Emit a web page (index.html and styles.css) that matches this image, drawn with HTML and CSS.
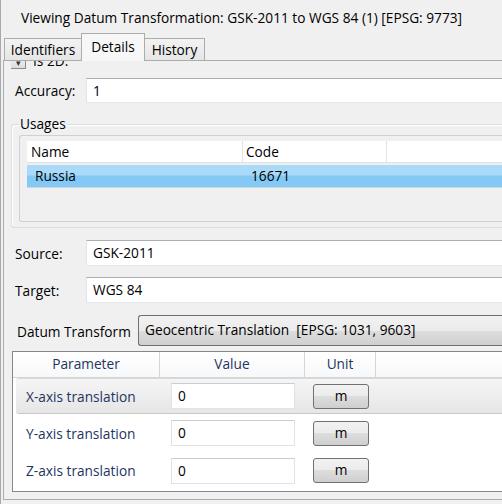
FILE: index.html
```html
<!DOCTYPE html>
<html lang="en">
<head>
  <meta charset="UTF-8">
  <title>Datum Transformation</title>
  <link rel="stylesheet" href="styles.css">
</head>
<body>
  <div class="window">
    <div class="title">Viewing Datum Transformation: GSK-2011 to WGS 84 (1) [EPSG: 9773]</div>

    <div class="tabs">
      <div class="tab tab-ids">Identifiers</div>
      <div class="tab tab-details active">Details</div>
      <div class="tab tab-history">History</div>
    </div>

    <div class="panel">
      <!-- scrolled: only the bottom of the first row shows -->
      <div class="scroll-clip">
        <div class="check-row">
          <span class="expander">&#9662;</span>
          <span>Is 2D:</span>
        </div>
      </div>

      <div class="field-row row-accuracy">
        <label class="field-label">Accuracy:</label>
        <div class="textbox">1</div>
      </div>

      <fieldset class="group">
        <legend>Usages</legend>
        <div class="listbox">
          <div class="list-header">
            <div class="col col-name">Name</div>
            <div class="col col-code">Code</div>
            <div class="col col-rest"></div>
          </div>
          <div class="list-row selected">
            <div class="col col-name">Russia</div>
            <div class="col col-code">16671</div>
          </div>
        </div>
      </fieldset>

      <div class="field-row row-source">
        <label class="field-label">Source:</label>
        <div class="textbox">GSK-2011</div>
      </div>

      <div class="field-row row-target">
        <label class="field-label">Target:</label>
        <div class="textbox">WGS 84</div>
      </div>

      <div class="datum-row">
        <label class="datum-label">Datum Transform</label>
        <div class="combo">Geocentric Translation  [EPSG: 1031, 9603]</div>
      </div>

      <div class="grid">
        <div class="grid-header">
          <div class="gcol gcol-param">Parameter</div>
          <div class="gcol gcol-value">Value</div>
          <div class="gcol gcol-unit">Unit</div>
          <div class="gcol gcol-rest"></div>
        </div>
        <div class="grid-row current">
          <div class="gcol gcol-param">X-axis translation</div>
          <div class="gcol gcol-value"><div class="cell-box">0</div></div>
          <div class="gcol gcol-unit"><div class="unit-btn">m</div></div>
        </div>
        <div class="grid-row row-y">
          <div class="gcol gcol-param">Y-axis translation</div>
          <div class="gcol gcol-value"><div class="cell-box">0</div></div>
          <div class="gcol gcol-unit"><div class="unit-btn">m</div></div>
        </div>
        <div class="grid-row">
          <div class="gcol gcol-param">Z-axis translation</div>
          <div class="gcol gcol-value"><div class="cell-box">0</div></div>
          <div class="gcol gcol-unit"><div class="unit-btn">m</div></div>
        </div>
      </div>
    </div>
  </div>
</body>
</html>
```

FILE: styles.css
```css
html, body {
  margin: 0;
  width: 502px;
  height: 504px;
  overflow: hidden;
}
body {
  background-color: #f0f0f0;
  font-family: "Open Sans", "Noto Sans", sans-serif;
  font-size: 13.7px;
  color: #000;
}
.window {
  width: 560px;
  height: 504px;
  border-left: 1px solid #a9a9a9;
  padding-left: 2px;
  box-sizing: border-box;
}
.title {
  height: 33px;
  box-sizing: border-box;
  padding: 9px 0 0 18px;
  line-height: 17px;
  white-space: nowrap;
}

/* tab strip */
.tabs {
  display: flex;
  align-items: flex-end;
  height: 27px;
  padding-left: 1px;
}
.tab {
  height: 22px;
  box-sizing: border-box;
  border: 1px solid #acacac;
  border-bottom: none;
  background: linear-gradient(#f3f3f3, #e5e5e5);
  display: flex;
  align-items: center;
  justify-content: center;
  line-height: 16px;
}
.tab-ids {
  width: 77px;
  border-right: none;
}
.tab-details {
  width: 64px;
}
.tab-history {
  width: 60px;
  border-left: none;
}
.tab.active {
  height: 28px;
  margin-bottom: -1px;
  background: #f7f7f7;
  position: relative;
  z-index: 1;
  padding-bottom: 2px;
}

.panel {
  height: 440px;
  box-sizing: border-box;
  border-top: 1px solid #acacac;
  border-left: 1px solid #acacac;
  border-bottom: 1px solid #acacac;
  padding-left: 7px;
}

.scroll-clip {
  height: 17px;
  overflow: hidden;
}
.check-row {
  margin-top: -8px;
  display: flex;
  align-items: center;
  gap: 7px;
  height: 16px;
  line-height: 16px;
}
.expander {
  width: 16px;
  height: 15px;
  box-sizing: border-box;
  margin-left: -1px;
  border: 1px solid #8a8a8a;
  background: linear-gradient(#f6f6f6, #dcdcdc);
  font-size: 9px;
  line-height: 15px;
  text-align: center;
  color: #333;
}

/* label + textbox rows */
.field-row {
  display: flex;
  align-items: center;
  height: 26px;
  padding-left: 4px;
}
.field-label {
  width: 71px;
  flex: none;
}
.textbox {
  flex: 1;
  height: 26px;
  box-sizing: border-box;
  background: #fff;
  border: 1px solid #e2e3ea;
  border-top-color: #abadb3;
  border-bottom-color: #e3e9ef;
  padding-left: 6px;
  line-height: 23px;
}
.row-accuracy {
  height: 25px;
}
.row-accuracy .textbox {
  height: 25px;
}
.row-source {
  margin-top: 12px;
}
.row-target {
  margin-top: 11px;
}

/* usages group box */
.group {
  margin: 13px 0 0 0;
  padding: 0 0 5px 7px;
  border: 1px solid #d5dfe5;
  border-right: none;
  border-radius: 3px 0 0 3px;
  box-shadow: inset 1px 1px 0 #fff;
}
.group legend {
  padding: 0 1px;
  line-height: 16px;
}
.listbox {
  margin-top: 3px;
  height: 87px;
  box-sizing: border-box;
  border: 1px solid #d0d0d0;
  border-right: none;
  border-radius: 3px 0 0 3px;
  padding: 5px 0 0 7px;
}
.list-header {
  display: flex;
  height: 22px;
  background: #fff;
  border-bottom: 1px solid #e0e0e0;
  box-sizing: border-box;
}
.list-header .col {
  border-right: 1px solid #e3e3e3;
  line-height: 22px;
}
.col {
  box-sizing: border-box;
  flex: none;
}
.col-name {
  width: 216px;
  padding-left: 4px;
}
.col-code {
  width: 144px;
  padding-left: 3px;
}
.col-rest {
  flex: 1;
}
.list-row {
  display: flex;
  height: 23px;
  margin-top: 2px;
  line-height: 22px;
}
.list-row .col {
  padding-left: 8px;
}
.list-row.selected {
  background: linear-gradient(#a9daf9 0, #a9daf9 45%, #84c9f6 50%, #84c9f6 100%);
  border-bottom: 1px solid #c9d7e0;
  box-sizing: border-box;
}

/* datum transform combo */
.datum-row {
  display: flex;
  align-items: center;
  margin-top: 12px;
  padding-left: 6px;
  height: 31px;
}
.datum-label {
  width: 121px;
  flex: none;
  padding-top: 2px;
}
.combo {
  flex: 1;
  height: 31px;
  box-sizing: border-box;
  border: 1px solid #707070;
  border-right: none;
  border-radius: 3px 0 0 3px;
  background: linear-gradient(#f2f2f2 0, #ebebeb 50%, #dddddd 50%, #cfcfcf 100%);
  padding-left: 6px;
  line-height: 28px;
  white-space: pre;
}

/* parameter grid */
.grid {
  margin: 5px 0 0 1px;
  height: 141px;
  box-sizing: border-box;
  border: 1px solid #828790;
  border-right: none;
  background: #fff;
  color: #1e3561;
}
.grid-header {
  display: flex;
  height: 26px;
  box-sizing: border-box;
  border-bottom: 1px solid #d5d5d5;
  background: linear-gradient(#ffffff, #f7f8f9);
}
.grid-header .gcol {
  border-right: 1px solid #d5d5d5;
  text-align: center;
  line-height: 24px;
}
.gcol {
  box-sizing: border-box;
  flex: none;
}
.gcol-param {
  width: 147px;
}
.gcol-value {
  width: 145px;
}
.gcol-unit {
  width: 71px;
}
.gcol-rest {
  flex: 1;
}
.grid-row {
  display: flex;
  align-items: center;
  height: 37px;
  margin-left: 3px;
}
.grid-row.row-y {
  height: 38px;
}
.grid-row .gcol-param {
  width: 144px;
  padding-left: 10px;
}
.grid-row.current {
  height: 36px;
  background: linear-gradient(#f5f5f5, #e6e6e6);
  border-top: 1px solid #d9d9d9;
  border-bottom: 1px solid #c8c8c8;
  border-radius: 3px 0 0 3px;
  box-sizing: border-box;
}
.cell-box {
  width: 124px;
  height: 26px;
  box-sizing: border-box;
  margin-left: 11px;
  background: #fff;
  border: 1px solid #dde3e9;
  border-top-color: #c9ced6;
  padding-left: 6px;
  line-height: 24px;
  color: #000;
}
.unit-btn {
  width: 56px;
  height: 25px;
  box-sizing: border-box;
  margin-left: 8px;
  border: 1px solid #707070;
  border-radius: 3px;
  background: linear-gradient(#f2f2f2 0, #ebebeb 50%, #dddddd 50%, #cfcfcf 100%);
  text-align: center;
  line-height: 22px;
  color: #000;
}
```
